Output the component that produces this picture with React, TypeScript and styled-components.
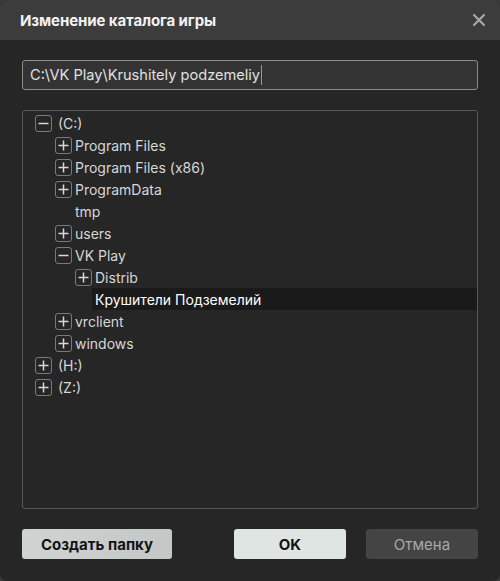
import styled, { createGlobalStyle } from "styled-components";

const GlobalStyle = createGlobalStyle`
  html, body {
    margin: 0;
    padding: 0;
    background: #3a3a3a;
  }
  * { box-sizing: border-box; }
`;

const Window = styled.div`
  width: 500px;
  height: 581px;
  display: flex;
  flex-direction: column;
  background-color: #262626;
  border-radius: 7px;
  overflow: hidden;
  font-family: Inter, "Noto Sans", sans-serif;
`;

const Header = styled.div`
  height: 40px;
  flex-shrink: 0;
  display: flex;
  align-items: center;
  justify-content: space-between;
  padding: 0 13px 0 20px;
  background-color: #3c3c3c;
`;

const Title = styled.div`
  color: #f2f2f2;
  font-size: 15px;
  font-weight: 700;
  letter-spacing: -0.1px;
`;

const CloseButton = styled.div`
  width: 16px;
  height: 16px;
  cursor: pointer;
  color: #a8a8a8;
  display: flex;
  svg { width: 16px; height: 16px; }
`;

const Body = styled.div`
  flex: 1;
  display: flex;
  flex-direction: column;
  padding: 20px 22px 22px;
`;

const PathInput = styled.div`
  height: 30px;
  display: flex;
  align-items: center;
  padding: 0 7px;
  border: 1px solid #8c8c8c;
  border-radius: 3px;
  background-color: #333333;
  color: #e0e0e0;
  font-size: 14.6px;
`;

const Caret = styled.span`
  display: inline-block;
  width: 1px;
  height: 20px;
  margin-left: 1px;
  background-color: #9a9a9a;
`;

const TreePanel = styled.div`
  margin-top: 20px;
  height: 399px;
  border: 1px solid #585858;
  border-radius: 3px;
  padding-top: 1px;
  display: flex;
  flex-direction: column;
`;

const Row = styled.div<{ $level: number; $selected?: boolean }>`
  height: 22px;
  display: flex;
  align-items: center;
  padding-left: ${(p) => 12 + p.$level * 20}px;
  color: ${(p) => (p.$selected ? "#ffffff" : "#d6d6d6")};
  font-size: 14px;
`;

const Label = styled.span<{ $selected?: boolean; $root?: boolean }>`
  flex: 1;
  height: 22px;
  display: flex;
  align-items: center;
  padding-left: ${(p) => (p.$root ? 6 : 3)}px;
  background-color: ${(p) => (p.$selected ? "#1a1a1a" : "transparent")};
`;

const Toggle = styled.span<{ $hidden?: boolean }>`
  width: 17px;
  height: 17px;
  flex-shrink: 0;
  border: 1px solid ${(p) => (p.$hidden ? "transparent" : "#7a7a7a")};
  border-radius: 3px;
  display: flex;
  align-items: center;
  justify-content: center;
  color: #d8d8d8;
  svg { width: 11px; height: 11px; }
`;

const Footer = styled.div`
  margin-top: 20px;
  display: flex;
  gap: 20px;
`;

const Button = styled.button<{ $variant: "light" | "primary" | "dark" }>`
  height: 30px;
  border: none;
  border-radius: 3px;
  font-family: Inter, "Noto Sans", sans-serif;
  font-size: 15px;
  cursor: pointer;
  font-weight: ${(p) => (p.$variant === "dark" ? 400 : 700)};
  color: ${(p) => (p.$variant === "dark" ? "#a9a9a9" : "#141414")};
  background: ${(p) =>
    p.$variant === "light"
      ? "linear-gradient(90deg, #cfd4d2, #c3c8c6)"
      : p.$variant === "primary"
      ? "#dfe5e3"
      : "#444444"};
`;

const CreateButton = styled(Button)`
  width: 150px;
  margin-right: 42px;
`;

const OkButton = styled(Button)`
  width: 112px;
`;

const CancelButton = styled(Button)`
  width: 112px;
`;

type Node = { name: string; level: number; toggle?: "plus" | "minus"; selected?: boolean };

const nodes: Node[] = [
  { name: "(C:)", level: 0, toggle: "minus" },
  { name: "Program Files", level: 1, toggle: "plus" },
  { name: "Program Files (x86)", level: 1, toggle: "plus" },
  { name: "ProgramData", level: 1, toggle: "plus" },
  { name: "tmp", level: 1 },
  { name: "users", level: 1, toggle: "plus" },
  { name: "VK Play", level: 1, toggle: "minus" },
  { name: "Distrib", level: 2, toggle: "plus" },
  { name: "Крушители Подземелий", level: 2, selected: true },
  { name: "vrclient", level: 1, toggle: "plus" },
  { name: "windows", level: 1, toggle: "plus" },
  { name: "(H:)", level: 0, toggle: "plus" },
  { name: "(Z:)", level: 0, toggle: "plus" },
];

function ToggleIcon({ kind }: { kind?: "plus" | "minus" }) {
  if (!kind) return null;
  return (
    <svg viewBox="0 0 11 11" fill="none" stroke="currentColor" strokeWidth="1.5">
      <path d="M0.5 5.5h10" />
      {kind === "plus" && <path d="M5.5 0.5v10" />}
    </svg>
  );
}

export default function App() {
  return (
    <>
      <GlobalStyle />
      <Window>
        <Header>
          <Title>Изменение каталога игры</Title>
          <CloseButton>
            <svg viewBox="0 0 16 16" fill="none" stroke="currentColor" strokeWidth="2.2" strokeLinecap="round">
              <path d="M3 3l10 10M13 3L3 13" />
            </svg>
          </CloseButton>
        </Header>
        <Body>
          <PathInput>
            C:\VK Play\Krushitely podzemeliy
            <Caret />
          </PathInput>
          <TreePanel>
            {nodes.map((n) => (
              <Row key={n.name} $level={n.level} $selected={n.selected}>
                <Toggle $hidden={!n.toggle}>
                  <ToggleIcon kind={n.toggle} />
                </Toggle>
                <Label $selected={n.selected} $root={n.level === 0}>
                  {n.name}
                </Label>
              </Row>
            ))}
          </TreePanel>
          <Footer>
            <CreateButton $variant="light">Создать папку</CreateButton>
            <OkButton $variant="primary">OK</OkButton>
            <CancelButton $variant="dark">Отмена</CancelButton>
          </Footer>
        </Body>
      </Window>
    </>
  );
}
